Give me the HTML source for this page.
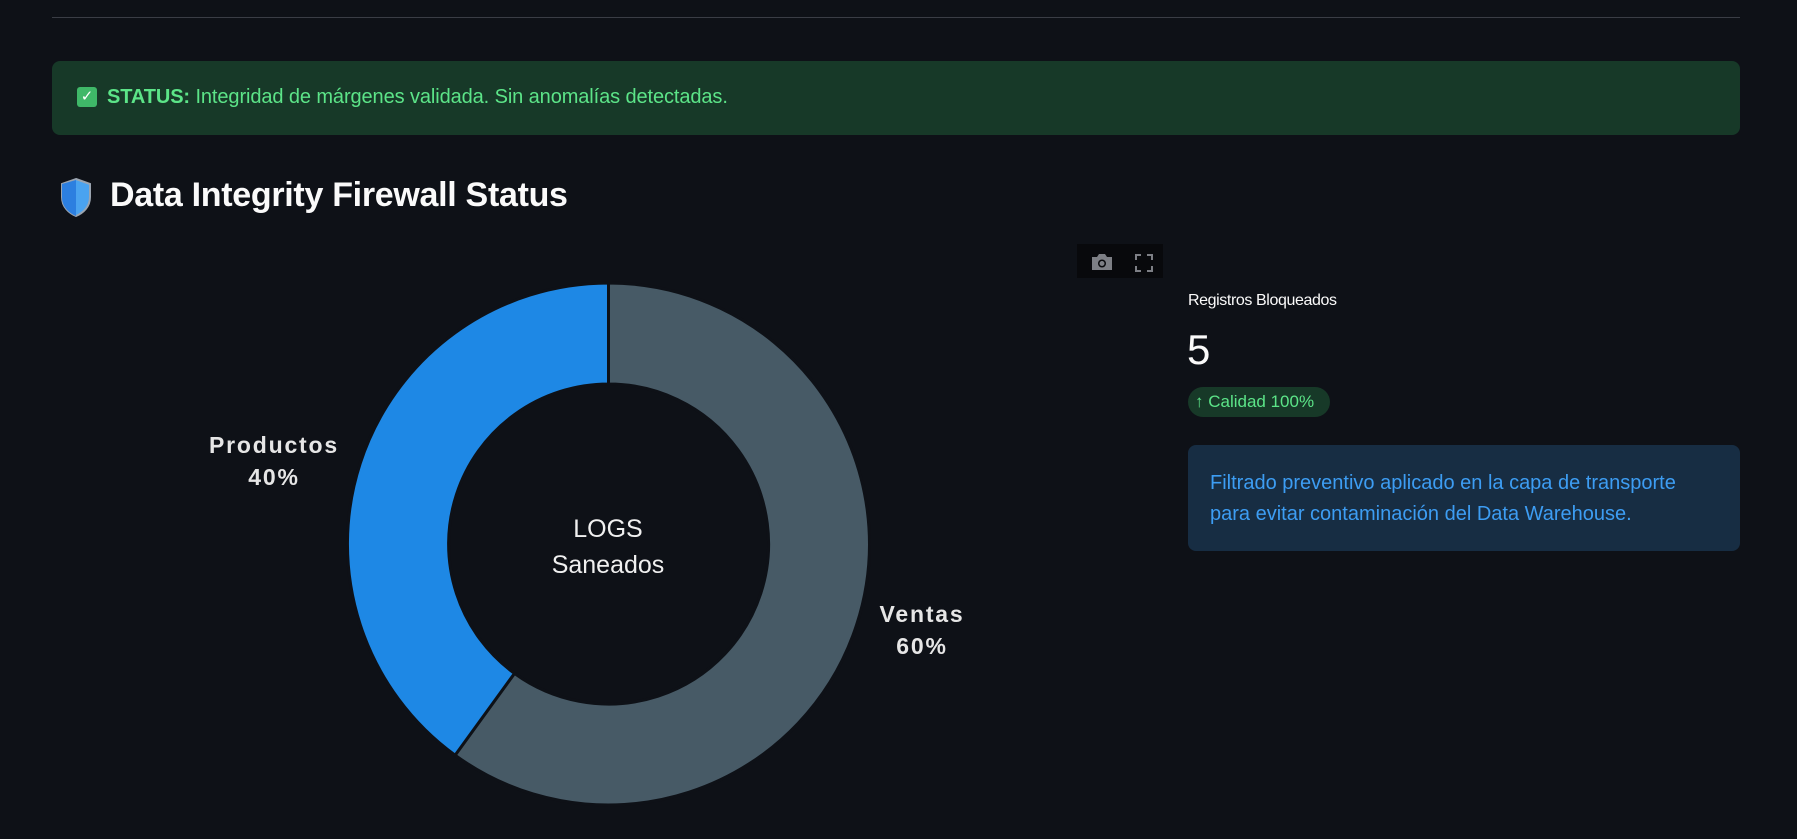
<!DOCTYPE html>
<html><head><meta charset="utf-8"><style>
html,body{margin:0;padding:0;background:#0e1117;width:1797px;height:839px;overflow:hidden;font-family:"Liberation Sans",sans-serif}
.abs{position:absolute}
</style></head><body>
<div class="abs" style="left:52px;top:17px;width:1688px;height:1px;background:#3a3d45"></div>
<div class="abs" style="left:52px;top:61px;width:1688px;height:74px;background:#173928;border-radius:8px"></div>
<div class="abs" style="left:77px;top:87px;width:20px;height:20px;background:#3fb868;border-radius:3px;color:#fff;font-size:15px;line-height:20px;text-align:center">✓</div>
<div class="abs" style="left:107px;top:86px;font-size:20px;color:#5ce488;letter-spacing:-0.1px;white-space:nowrap"><b>STATUS:</b> Integridad de márgenes validada. Sin anomalías detectadas.</div>
<svg class="abs" style="left:59px;top:177px" width="34" height="40" viewBox="0 0 34 40"><path d="M17 2 L31 7 L31 20 C31 30 24 36 17 39 C10 36 3 30 3 20 L3 7 Z" fill="#4aa3f0" stroke="#9aa4b0" stroke-width="2"/><path d="M17 3 L3 7 L3 20 C3 30 10 36 17 39 Z" fill="#2c7fe0"/></svg>
<div class="abs" style="left:110px;top:176px;font-size:34px;font-weight:bold;color:#fafafa;letter-spacing:-0.3px;white-space:nowrap">Data Integrity Firewall Status</div>
<svg class="abs" style="left:0;top:0" width="1797" height="839">
<path d="M608.5 283 A261 261 0 1 1 455.1 755.2 L514.5 673.4 A160 160 0 1 0 608.5 384 Z" fill="#475a66" stroke="#0e1117" stroke-width="3"/>
<path d="M608.5 283 A261 261 0 0 0 455.1 755.2 L514.5 673.4 A160 160 0 0 1 608.5 384 Z" fill="#1e88e5" stroke="#0e1117" stroke-width="3"/>
<g font-family="Liberation Sans,sans-serif" font-weight="bold" font-size="23" fill="#e6e6e6" text-anchor="middle" letter-spacing="1.8">
<text x="274" y="453">Productos</text><text x="274" y="485">40%</text>
<text x="922" y="622">Ventas</text><text x="922" y="654">60%</text>
</g>
<g font-family="Liberation Sans,sans-serif" font-size="25" fill="#f0f0f0" text-anchor="middle">
<text x="608" y="537">LOGS</text><text x="608" y="573">Saneados</text>
</g>
</svg>
<div class="abs" style="left:1077px;top:244px;width:86px;height:34px;background:#08090c"></div>
<svg class="abs" style="left:1090px;top:252px" width="24" height="20" viewBox="0 0 24 20"><path d="M2 5 H7 L9 2 H15 L17 5 H22 V18 H2 Z" fill="#7d7f85"/><circle cx="12" cy="11.5" r="4" fill="#08090c"/><circle cx="12" cy="11.5" r="2.5" fill="#7d7f85"/></svg>
<svg class="abs" style="left:1135px;top:254px" width="18" height="18" viewBox="0 0 18 18" fill="none" stroke="#7d7f85" stroke-width="2"><path d="M1 6V1H6M12 1H17V6M17 12V17H12M6 17H1V12"/></svg>
<div class="abs" style="left:1188px;top:292px;font-size:16px;color:#fafafa;letter-spacing:-0.4px">Registros Bloqueados</div>
<div class="abs" style="left:1187px;top:326px;font-size:42px;color:#fafafa">5</div>
<div class="abs" style="left:1188px;top:387px;width:142px;height:30px;background:#173928;border-radius:15px;color:#5ce488;font-size:17px;line-height:30px;text-indent:7px;white-space:nowrap">↑ Calidad 100%</div>
<div class="abs" style="left:1188px;top:445px;width:552px;height:106px;background:#172d43;border-radius:8px"></div>
<div class="abs" style="left:1210px;top:468px;font-size:20px;line-height:31px;color:#3d9df3;white-space:nowrap">Filtrado preventivo aplicado en la capa de transporte<br>para evitar contaminación del Data Warehouse.</div>
</body></html>
